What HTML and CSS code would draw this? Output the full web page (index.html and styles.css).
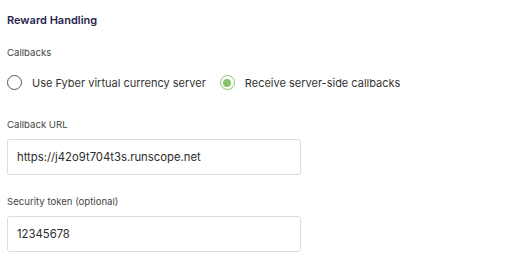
FILE: index.html
```html
<!DOCTYPE html>
<html lang="en">

<head>
    <meta charset="UTF-8" />
    <title>Reward Handling</title>
    <link rel="stylesheet" href="styles.css">
</head>

<body>
    <section class="reward">
        <h3 class="section-title">Reward Handling</h3>

        <div class="field field-radios">
            <div class="field-label">Callbacks</div>
            <div class="radio-group">
                <label class="radio">
                    <span class="radio-dot"></span>
                    Use Fyber virtual currency server
                </label>
                <label class="radio checked">
                    <span class="radio-dot"></span>
                    Receive server-side callbacks
                </label>
            </div>
        </div>

        <div class="field">
            <div class="field-label">Callback URL</div>
            <input class="text-input" type="text" value="https://j42o9t704t3s.runscope.net" />
        </div>

        <div class="field">
            <div class="field-label">Security token (optional)</div>
            <input class="text-input" type="text" value="12345678" />
        </div>
    </section>
</body>

</html>
```

FILE: styles.css
```css
* {
    box-sizing: border-box;
}

body {
    margin: 0;
    font-family: Inter, 'Noto Sans', sans-serif;
    background-color: #fff;
    color: #333;
}

.reward {
    padding: 13px 7px 0;
}

.section-title {
    margin: 0 0 19px;
    font-size: 11px;
    font-weight: 600;
    color: #2a2650;
    line-height: 14px;
}

.field {
    margin-bottom: 20px;
}

.field:last-child {
    margin-bottom: 0;
}

.field-radios {
    margin-bottom: 28px;
}

.field-label {
    font-size: 9.6px;
    line-height: 14px;
    color: #444;
    margin-bottom: 7px;
}

.field-radios .field-label {
    margin-bottom: 15px;
}

.radio-group {
    display: flex;
    gap: 14px;
}

.radio {
    display: flex;
    align-items: center;
    gap: 10px;
    height: 15px;
    font-size: 11px;
    color: #333;
}

.radio-dot {
    width: 15px;
    height: 15px;
    border: 1.5px solid #555;
    border-radius: 50%;
    display: flex;
    align-items: center;
    justify-content: center;
}

.radio.checked .radio-dot {
    border-color: #8cc26a;
}

.radio.checked .radio-dot::after {
    content: '';
    width: 8px;
    height: 8px;
    border-radius: 50%;
    background: #8cc26a;
}

.text-input {
    display: block;
    width: 294px;
    height: 36px;
    padding: 0 9px;
    border: 1px solid #ddd;
    border-radius: 3px;
    font-family: inherit;
    font-size: 11.3px;
    color: #2b2b2b;
    background: #fff;
}
```
